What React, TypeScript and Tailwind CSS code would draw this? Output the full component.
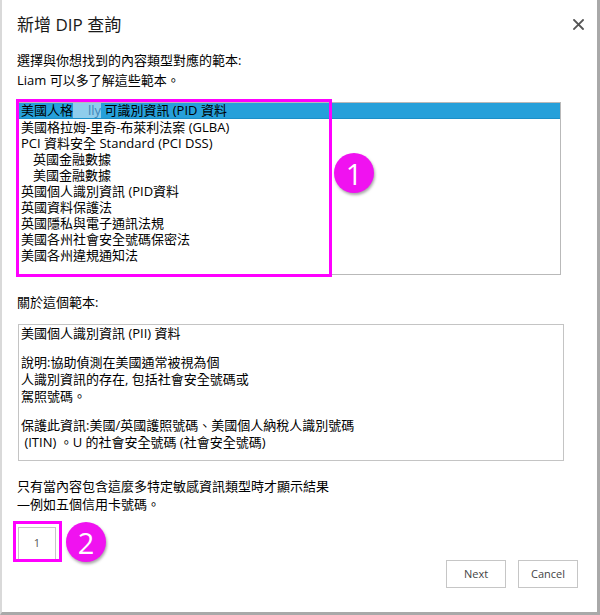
import React from "react";

const font = "font-['Open_Sans','Noto_Sans_CJK_TC',sans-serif]";

const templates: { label: React.ReactNode; indent?: boolean; selected?: boolean }[] = [
  {
    label: (
      <>
        美國人格
        <span className="inline-block w-[28px] bg-[#8fcdec] text-right text-[#3f86b8]">lly</span>
        {" "}可識別資訊 (PID 資料
      </>
    ),
    selected: true,
  },
  { label: "美國格拉姆-里奇-布萊利法案 (GLBA)" },
  { label: "PCI 資料安全 Standard (PCI DSS)" },
  { label: "英國金融數據", indent: true },
  { label: "美國金融數據", indent: true },
  { label: "英國個人識別資訊 (PID資料" },
  { label: "英國資料保護法" },
  { label: "英國隱私與電子通訊法規" },
  { label: "美國各州社會安全號碼保密法" },
  { label: "美國各州違規通知法" },
];

function CloseIcon() {
  return (
    <svg width="11" height="11" viewBox="0 0 11 11" className="block">
      <path d="M1 1 L10 10 M10 1 L1 10" stroke="#555" strokeWidth="1.8" strokeLinecap="square" />
    </svg>
  );
}

function Badge({ n, className }: { n: string; className: string }) {
  return (
    <div
      className={`absolute w-[40px] h-[40px] rounded-full bg-[#f012f0] shadow-[1px_2px_3px_rgba(0,0,0,0.35)] flex items-center justify-center text-white text-[29px] leading-none font-['Open_Sans',sans-serif] ${className}`}
    >
      {n}
    </div>
  );
}

export default function App() {
  return (
    <div
      className={`relative w-[600px] h-[615px] bg-white border-l-2 border-l-[#d9d9d9] border-r-[3px] border-r-[#a9a9a9] border-b-[3px] border-b-[#a9a9a9] overflow-hidden text-black ${font}`}
    >
      <div className="pl-[15px] pt-[13px]">
        <div className="w-[567px] flex items-center justify-between">
          <h1 className="text-[17px] leading-[24px] text-[#1a1a1a]">新增 DIP 查詢</h1>
          <button className="p-0 -mt-[2px]">
            <CloseIcon />
          </button>
        </div>

        <p className="mt-[13px] text-[13px] leading-[20px]">
          選擇與你想找到的內容類型對應的範本:
          <br />
          Liam 可以多了解這些範本。
        </p>

        <div className="mt-[12px] ml-[1px] w-[543px] h-[173px] border border-[#b9b9b9] text-[13px] leading-[16px]">
          {templates.map((t, i) => (
            <div
              key={i}
              className={`h-[16px] whitespace-nowrap ${t.indent ? "pl-[14px]" : "pl-[2px]"} ${
                t.selected ? "bg-[#26a0da] border-b border-b-[#1b8fc8] leading-[15px]" : ""
              }`}
            >
              {t.label}
            </div>
          ))}
        </div>

        <p className="mt-[17px] text-[13px] leading-[20px]">關於這個範本:</p>

        <div className="mt-[12px] ml-[1px] w-[546px] h-[137px] border border-[#c4c4c4] px-[2px] text-[13px] leading-[17px]">
          <p>美國個人識別資訊 (PII) 資料</p>
          <p className="mt-[12px]">
            說明:協助偵測在美國通常被視為個
            <br />
            人識別資訊的存在, 包括社會安全號碼或
            <br />
            駕照號碼。
          </p>
          <p className="mt-[12px]">
            保護此資訊:美國/英國護照號碼、美國個人納稅人識別號碼
            <br />
            &nbsp;(ITIN) 。U 的社會安全號碼 (社會安全號碼)
          </p>
        </div>

        <p className="mt-[16px] text-[13px] leading-[18px]">
          只有當內容包含這麼多特定敏感資訊類型時才顯示結果
          <br />
          —例如五個信用卡號碼。
        </p>

        <div className="mt-[14px] ml-[1px] w-[38px] h-[33px] border border-[#c6c6c6] flex items-center justify-center text-[11px] text-[#555]">
          1
        </div>

        <div className="w-[561px] flex justify-end gap-[12px]">
          <button className="w-[60px] h-[28px] border border-[#c6c6c6] bg-white text-[11px] text-[#444]">
            Next
          </button>
          <button className="w-[60px] h-[28px] border border-[#c6c6c6] bg-white text-[11px] text-[#444]">
            Cancel
          </button>
        </div>
      </div>

      {/* callout frames and numbered markers */}
      <div className="absolute left-[14px] top-[99px] w-[316px] h-[178px] border-[3px] border-[#ff00ff]" />
      <Badge n="1" className="left-[332px] top-[153px]" />
      <div className="absolute left-[11px] top-[521px] w-[49px] h-[41px] border-[3px] border-[#ff00ff]" />
      <Badge n="2" className="left-[64px] top-[522px]" />
    </div>
  );
}
